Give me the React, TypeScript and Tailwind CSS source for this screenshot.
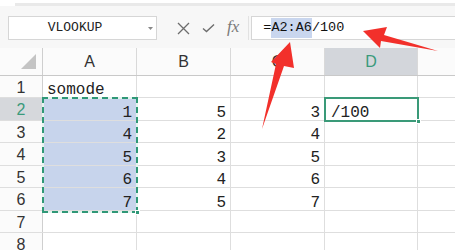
import React from "react";

const mono = { fontFamily: '"Liberation Mono", "DejaVu Sans Mono", monospace' };
const sans = { fontFamily: '"Liberation Sans", Arial, sans-serif' };

const rows: { h: string; a: string; b: string; c: string; d: string }[] = [
  { h: "h-[22px]", a: "somode", b: "", c: "", d: "" },
  { h: "h-[23px]", a: "1", b: "5", c: "3", d: "/100" },
  { h: "h-[22px]", a: "4", b: "2", c: "4", d: "" },
  { h: "h-[23px]", a: "5", b: "3", c: "5", d: "" },
  { h: "h-[22px]", a: "6", b: "4", c: "6", d: "" },
  { h: "h-[23px]", a: "7", b: "5", c: "7", d: "" },
  { h: "h-[22px]", a: "", b: "", c: "", d: "" },
  { h: "h-[23px]", a: "", b: "", c: "", d: "" },
];

export default function App() {
  return (
    <div className="relative w-[455px] h-[250px] overflow-hidden bg-white">
      {/* top strip */}
      <div className="h-[3px] bg-white" />
      <div className="h-[3px] bg-[#e9e9e9] ml-[15px]" />
      {/* toolbar */}
      <div className="h-[42px] bg-[#f7f7f7] flex items-start pt-[10px]">
        <div className="ml-[8px] w-[149px] h-[24px] bg-white border border-[#d6d6d6] flex items-center relative">
          <span className="flex-1 text-center text-[13px] text-[#222] pr-[15px]" style={mono}>VLOOKUP</span>
          <svg className="absolute right-[3px] top-[10px]" width="5" height="4" viewBox="0 0 5 4">
            <path d="M0 0 L5 0 L2.5 3 Z" fill="#888" />
          </svg>
        </div>
        <div className="ml-[20px] flex items-center h-[24px] gap-[12px]">
          <svg width="13" height="13" viewBox="0 0 13 13">
            <path d="M1 1 L12 12 M12 1 L1 12" stroke="#6d6d6d" strokeWidth="1.3" />
          </svg>
          <svg width="13" height="10" viewBox="0 0 13 10">
            <path d="M1 5.5 L4.5 8.5 L12 1.5" stroke="#6d6d6d" strokeWidth="1.4" fill="none" />
          </svg>
          <span className="text-[17px] italic text-[#7a7a7a] leading-none -mt-[3px]" style={{ fontFamily: '"Liberation Serif", serif' }}>fx</span>
        </div>
        <div className="ml-[9px] w-[1px] h-[24px] bg-[#e2e2e2]" />
        <div className="ml-[2px] flex-1 h-[24px] bg-white border border-[#d6d6d6] border-r-0 flex items-center pl-[11px] text-[13.5px] text-[#111]" style={mono}>
          <span>=</span>
          <span className="bg-[#c9d6ee]">A2:A6</span>
          <span>/100</span>
        </div>
      </div>

      {/* grid */}
      <div className="flex flex-col">
        {/* header row */}
        <div className="flex h-[28px] border-b border-[#c9c9c9] bg-[#fbfbfb]">
          <div className="w-[43px] border-r border-[#cfcfcf] relative">
            <svg className="absolute left-[21px] top-[6px]" width="15" height="15" viewBox="0 0 15 15">
              <path d="M15 0 L15 15 L0 15 Z" fill="#c4c4c4" />
            </svg>
          </div>
          {["A", "B", "C"].map((c) => (
            <div key={c} className="w-[94px] border-r border-[#d9d9d9] flex items-center justify-center text-[16px] text-[#333]" style={sans}>
              {c}
            </div>
          ))}
          <div className="w-[93px] border-r border-[#d9d9d9] bg-[#d3d6db] flex items-center justify-center text-[16px] text-[#3a9a7b]" style={sans}>
            D
          </div>
          <div className="flex-1" />
        </div>
        {rows.map((r, i) => {
          const sel = i >= 1 && i <= 5;
          const active = i === 1;
          return (
            <div key={i} className={`flex ${r.h} border-b border-[#dedede]`}>
              <div
                className={`w-[43px] border-r border-[#cfcfcf] flex items-center justify-center pt-[2px] text-[16px] ${active ? "bg-[#d6d8dc] text-[#3a9a7b]" : "bg-[#fbfbfb] text-[#333]"}`}
                style={sans}
              >
                {i + 1}
              </div>
              <div
                className={`w-[94px] border-r border-[#dedede] flex items-end leading-[12px] pb-[1px] text-[16px] text-[#222] ${i === 0 ? "justify-start pl-[4px]" : "justify-end pr-[4px]"} ${sel ? "bg-[#c7d4ec]" : ""}`}
                style={mono}
              >
                {r.a}
              </div>
              <div className="w-[94px] border-r border-[#dedede] flex items-end leading-[12px] pb-[1px] justify-end pr-[4px] text-[16px] text-[#222]" style={mono}>
                {r.b}
              </div>
              <div className="w-[94px] border-r border-[#dedede] flex items-end leading-[12px] pb-[1px] justify-end pr-[4px] text-[16px] text-[#222]" style={mono}>
                {r.c}
              </div>
              <div className="w-[93px] border-r border-[#dedede] flex items-end leading-[12px] pb-[1px] justify-start pl-[6px] text-[16px] text-[#222]" style={mono}>
                {r.d}
              </div>
              <div className="flex-1" />
            </div>
          );
        })}
      </div>

      {/* marching ants selection A2:A6 */}
      <div className="absolute left-[42px] top-[97px] w-[96px] h-[116px] border-2 border-[#e3f4ee] pointer-events-none">
        <div className="absolute -inset-[2px] border-2 border-dashed border-[#2f9877]" />
        <div className="absolute -right-[4px] -bottom-[4px] w-[5px] h-[5px] bg-[#2f9877] border border-white" />
      </div>

      {/* active cell D2 */}
      <div className="absolute left-[324px] top-[97px] w-[95px] h-[25px] border-2 border-[#3a9a78] pointer-events-none">
        <div className="absolute -right-[4px] -bottom-[4px] w-[5px] h-[5px] bg-[#3a9a78] border border-white" />
      </div>

      {/* red arrows */}
      <svg className="absolute left-0 top-0 pointer-events-none" width="455" height="250" viewBox="0 0 455 250">
        <path d="M262 129 L276 64 L271 62 L290 42 L294 68 L284 66 Z" fill="#f2302b" />
        <path d="M363 31 L387 27 L384 35 L438 51 L381 41 L380 48 Z" fill="#f2302b" />
      </svg>
    </div>
  );
}
